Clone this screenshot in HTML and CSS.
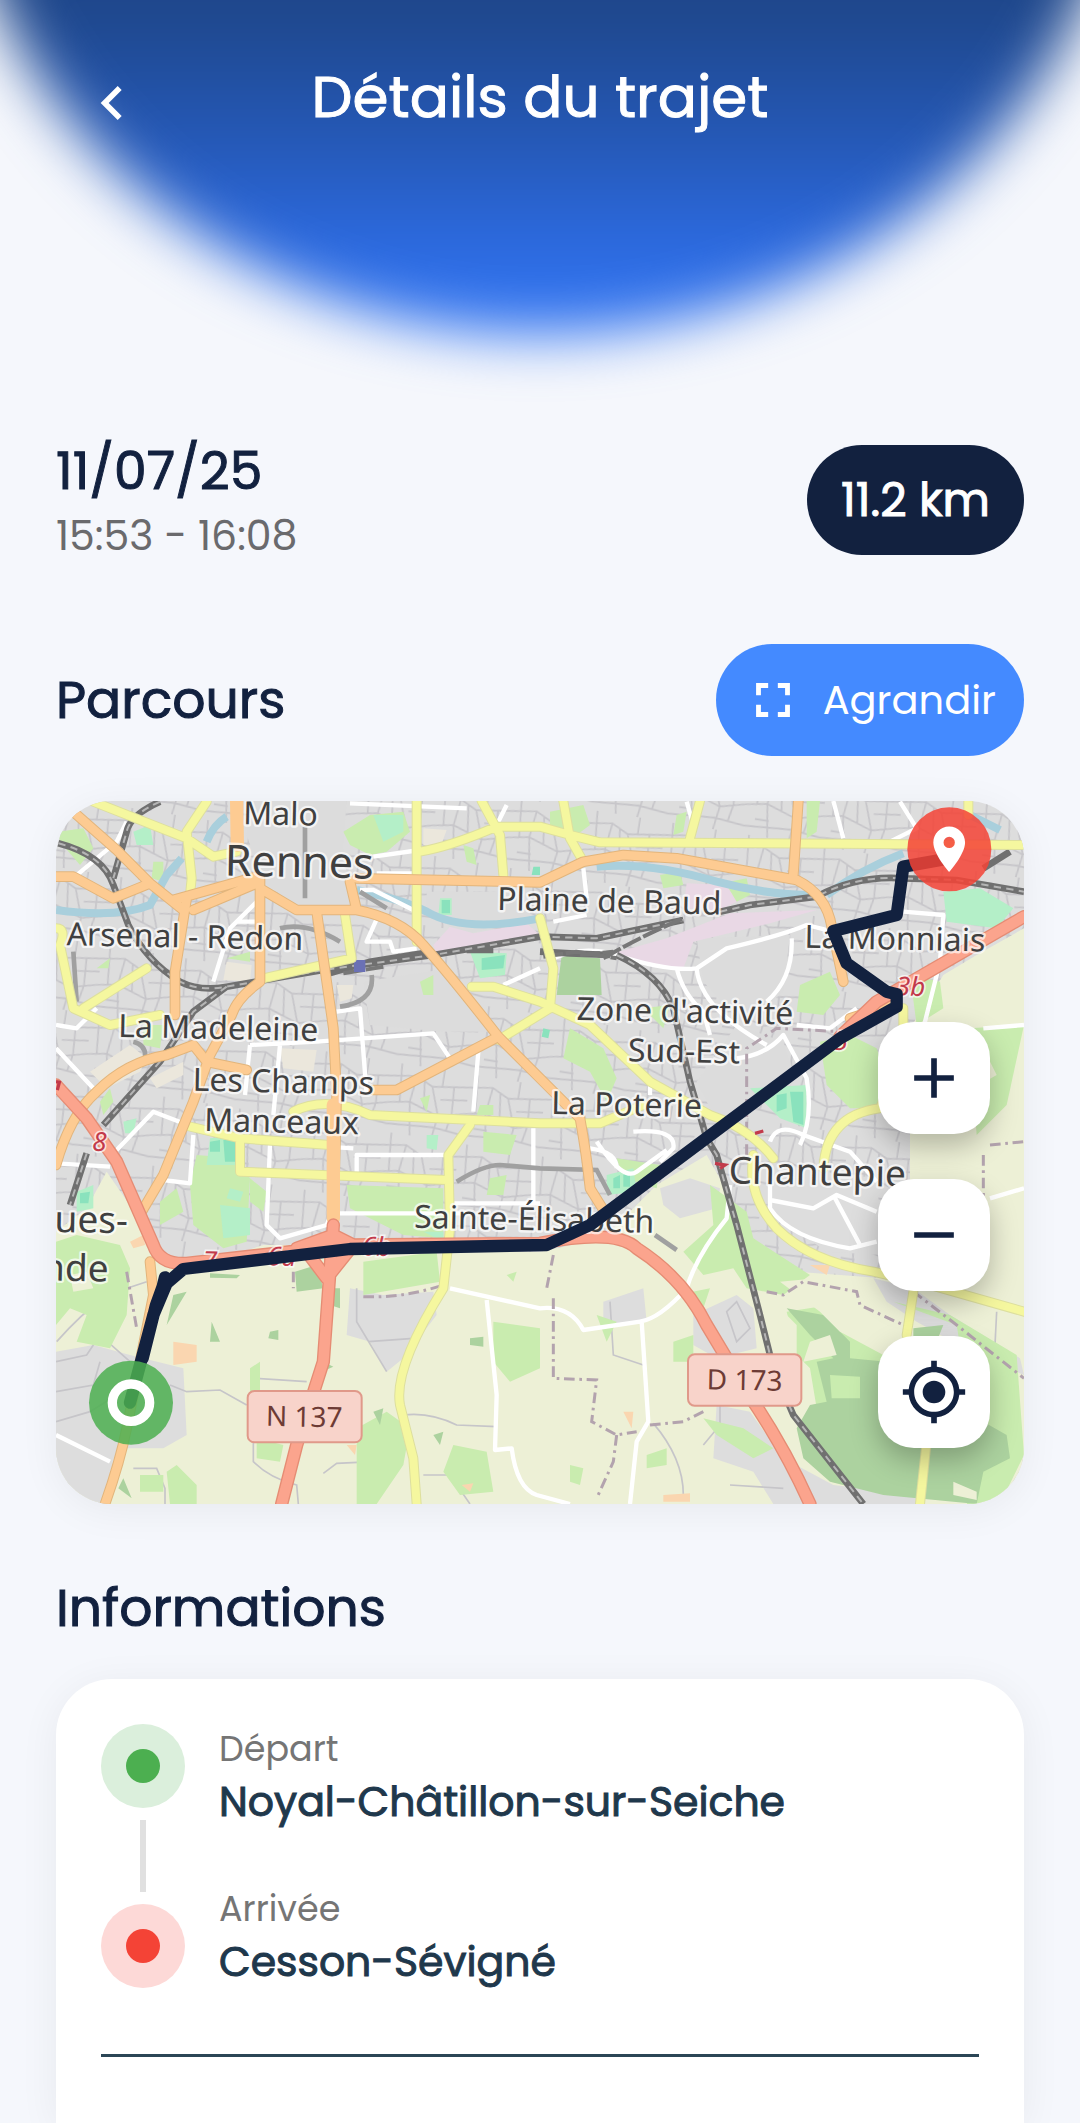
FILE: index.html
```
<!DOCTYPE html>
<html lang="fr">
<head>
    <meta charset="UTF-8">
    <meta name="viewport" content="width=device-width, initial-scale=1.0">
    <title>Détails du trajet</title>
    <link rel="stylesheet" href="styles.css">
</head>
<body>
    <header class="header">
        <button class="back" type="button" aria-label="Retour">
            <svg class="icon" viewBox="0 0 24 24"><path d="M15.41 7.41L14 6l-6 6 6 6 1.41-1.41L10.83 12z"/></svg>
        </button>
        <h1>Détails du trajet</h1>
    </header>

    <main class="content">
        <section class="summary">
            <div>
                <p class="date">11/07/25</p>
                <p class="hours">15:53 - 16:08</p>
            </div>
            <span class="distance">11.2 km</span>
        </section>

        <section class="title-row">
            <h2>Parcours</h2>
            <button class="expand" type="button">
                <svg class="icon-small" viewBox="0 0 24 24"><path d="M7 14H5v5h5v-2H7v-3zm-2-4h2V7h3V5H5v5zm12 7h-3v2h5v-5h-2v3zM14 5v2h3v3h2V5h-5z"/></svg>
                Agrandir
            </button>
        </section>

        <section class="map">
            <svg class="map-canvas" viewBox="18 18 2904 2109" preserveAspectRatio="xMidYMid slice">
                <defs>
                    <pattern id="streets" width="230" height="210" patternUnits="userSpaceOnUse" patternTransform="rotate(9)">
                        <path class="street" d="M0 40L70 30 120 55 230 40M0 120L60 110 150 140 230 120M70 30L60 110 75 210M120 55L150 140 140 210M185 45L190 128M20 0L30 118M30 160H72M0 185L140 175 230 185M190 128L180 180M150 0V50M95 45L105 125M150 90L230 80"/>
                    </pattern>
                </defs>

                <!-- land use -->
                <rect class="urban" x="0" y="0" width="2940" height="2140"/>
                <rect x="0" y="0" width="2940" height="2140" fill="url(#streets)"/>
                <path class="plain" d="M600 18H890L880 150 900 330 740 335 640 260 590 120zM1130 290H1350L1440 300V370L1240 420 1130 350zM940 560L1200 520 1330 710 1180 710 960 690zM1940 430L2220 420 2200 590 2080 690 1960 560zM2060 690L2200 740 2240 860 2010 1000 1940 860z"/>
                <path class="farm" d="M18 1310L110 1240 170 1130 260 1260 340 1400 520 1390 640 1350 930 1350 1150 1370 1470 1370 1660 1330 1820 1170 1970 1080 2060 1240 2090 1330 2240 1430 2500 1450 2580 1300V1080L2580 700 2680 540 2780 480 2922 400V2127H18z"/>
                <path class="sand" d="M120 830L240 750 290 790 270 830 170 880zM300 850L400 800 400 840 320 880zM530 500L605 510 600 560 520 555zM690 760L800 765 790 830 700 820zM860 570L910 570 905 610 870 620zM1120 100L1190 105 1170 160 1120 150z"/>
                <path class="urban" d="M18 1670L130 1650 240 1680 400 1720 410 1920 340 1960 230 1960 160 2127H18zM900 1480L1000 1500 1150 1490 1160 1560 1060 1690 1010 1730 960 1640 890 1620zM1830 1180L1920 1150 2010 1180 2000 1240 1890 1270 1840 1230zM1930 1560L2060 1500 2110 1540 2120 1660 2000 1690 1930 1650zM2170 2127L2110 2030 1990 1990 2000 1830 2100 1850 2200 1990 2350 2070 2600 2100V2127zM2470 1450L2590 1480 2700 1560 2910 1690 2922 1740 2780 1680 2600 1580 2510 1520zM2150 1110L2480 1150 2500 1380 2330 1370 2160 1250zM1660 1520L1780 1480 1790 1580 1660 1590z"/>
                <path class="street" d="M18 1700L110 1680 150 1620 240 1700M18 1790L130 1770 150 1700M18 1880L120 1850 200 1800M360 1770L410 1790 510 1785 590 1830M20 1640Q90 1560 170 1500L290 1460M610 1930V2000Q660 2050 740 2070L745 2127M620 1830V1750L770 1760M820 2035L860 2005 970 2000 1060 1980M1060 1860Q1140 1850 1220 1890L1340 1895M920 1480V1580L1010 1730M955 1640L1090 1630 1180 1500M1120 2040L1200 2040 1260 2127M1340 1680L1370 1660M1810 1885Q1900 1990 1900 2100M1680 1520L1690 1680 1780 1710M2010 1830V1890L1960 1950M2840 1550L2835 1650 2880 1700M250 2020H320L345 2080V2127M2040 2070L2200 2080M2030 1550L2060 1520 2100 1600 2060 1640z"/>

                <!-- parks, woods and sport grounds -->
                <path class="grass" d="M25 110L100 100 130 160 90 210 30 140zM880 110L960 60 1060 50 1080 110 1010 170 960 180 900 150zM1240 150L1270 160 1280 210 1250 200zM310 200H340V260L305 250zM140 520L180 490 175 520zM530 490L600 470 600 500zM1110 560L1150 540 1150 600 1120 600zM280 690L340 690 330 760 280 750zM150 920L180 880 190 920 160 960zM440 1080L560 1090 600 1150 590 1340 520 1360 430 1290 420 1170zM600 1150L650 1190 640 1250 600 1220zM330 1220L380 1180 400 1250 330 1290zM18 1340L80 1320 210 1350 240 1420 230 1560 180 1660 80 1640 110 1560 60 1540 18 1590zM890 1170L1180 1180 1180 1330 1060 1320 900 1240zM940 1400L1160 1370 1170 1460 940 1500zM1290 930H1330V960H1280zM1300 1010L1400 1020 1380 1080 1300 1070zM1110 910L1140 900 1130 950zM1320 1150L1370 1140 1360 1200 1310 1200zM1370 1440L1400 1430 1390 1460zM1500 50L1600 30 1620 90 1580 120 1500 90zM1880 60L1910 50 1900 110 1870 120zM2270 18H2310L2300 110 2270 130zM1990 270L2090 250 2100 300 2060 320zM1830 240L1890 230 1900 270 1840 280z"/>
                <path class="grass" d="M2310 740L2400 720 2480 760 2530 900 2480 940 2400 940 2330 870zM2600 820L2680 760 2760 700 2922 690 2870 930 2780 1020 2770 880 2840 840 2810 780zM2580 540L2670 560 2680 640 2600 690zM2250 570L2340 530 2370 600 2320 660 2240 650zM1780 640L1860 630 1840 700zM1560 700L1660 760 1700 850 1670 920 1620 830 1540 790zM1980 1170L2090 1250 2110 1330 2280 1440 2200 1500 2090 1480 2050 1420 1960 1440 1900 1370 1990 1290zM1700 1090L1830 1110 1820 1180 1720 1150zM1880 1500L1980 1480 1960 1540zM1640 1560L1700 1580 1670 1640zM1870 1640L1930 1620 1930 1700 1870 1700zM2210 1550L2340 1530 2440 1620 2520 1690 2500 1900 2310 1900 2280 1720 2240 1680zM2530 1520L2700 1560 2900 1680 2922 1980 2850 2127H2750L2840 1950 2760 1840 2720 1590zM1210 1950L1310 1970 1330 2090 1230 2100 1180 2030zM1330 1580L1470 1600 1470 1720 1380 1760 1330 1700zM920 1900L1010 1850 1080 1900 1060 2010 980 2127H920zM600 1720L630 1700V1790L600 1800zM620 1930L700 1950 690 2000 620 1990zM350 2030L380 2010 440 2070 440 2127H360zM270 2040L340 2040 340 2090 270 2090zM1790 1980L1850 1960 1850 2010 1790 2020zM1560 2010L1600 2020 1590 2070 1560 2060zM1960 1870L2080 1900 2170 1960 2110 1990 2000 1920z"/>
                <path class="wood" d="M1535 480L1650 490 1655 600 1520 600zM735 1430L800 1410 820 1480 740 1490zM845 1480L870 1480 870 1540 840 1530zM370 1500L410 1490 350 1590zM485 1580L510 1640 480 1640zM480 1435L570 1440 560 1450 480 1448zM660 1610L685 1605 685 1635 655 1630zM1260 1630L1300 1625 1300 1655 1260 1650zM1150 1920L1180 1910 1170 1950zM970 1850L1000 1840 990 1890zM820 1700L850 1715 815 1730zM220 2050L245 2110 205 2080zM2210 1540L2320 1560 2400 1640 2400 1690 2510 1700 2560 1790 2650 1860 2800 1880 2870 1920 2880 1990 2800 2030 2780 2127 2500 2100 2340 2060 2260 1990 2240 1900 2280 1830 2330 1820 2300 1700 2350 1690 2280 1620zM2590 1600L2680 1590 2660 1640 2590 1640z"/>
                <path class="farm" d="M2280 1640L2340 1620 2360 1680 2260 1700zM2190 1540L2240 1590 2240 1680 2170 1690zM2710 2060L2780 2090 2780 2115 2710 2100zM2190 1460L2300 1450 2440 1500 2520 1600 2500 1680 2370 1610 2310 1550zM60 1440L110 1430 130 1480 70 1490z"/>
                <path class="grass" d="M2340 1740L2430 1745 2430 1810 2345 1810z"/>
                <path class="sport" d="M250 110L300 90 310 150 260 150zM970 60L1060 60 1060 110 1000 140zM1170 310H1205V360H1165zM1260 470L1370 475 1365 540 1290 550zM480 1030L565 1020 560 1110 470 1110zM510 1230L600 1240 600 1320 520 1330zM80 1190L130 1170 130 1240 80 1250zM2100 880L2270 870 2270 1000 2190 970zM1670 1140L1750 1120 1760 1190 1670 1200zM2680 290L2790 280 2890 340 2840 400 2690 380zM220 980L260 970 250 1015 225 1015zM1130 1020L1165 1020 1160 1065 1130 1060zM540 1180L580 1190 570 1220 530 1210zM1120 1310L1180 1310 1180 1340z"/>
                <path class="pitch" d="M1175 315H1200V355H1175zM1295 490L1365 480 1360 520 1295 525zM480 1040L510 1035V1070H480zM520 1035H555V1100H525zM2180 900L2210 895V940L2180 950zM2220 890H2260V990L2230 980zM1690 1150L1710 1140V1180H1690zM1720 1140L1740 1130V1175H1720zM1480 700L1500 705 1495 730 1475 725zM1450 215H1470V240H1445zM90 1195L120 1190 115 1225H90z"/>
                <path class="retail" d="M1150 450L1200 395 1270 415 1430 385 1470 420 1330 455 1160 480zM1690 475L1850 430 2040 355 2300 345 2160 385 1930 440 1900 520 1790 505zM1910 265L2030 270 2060 320 2010 345 1900 340z"/>
                <path class="peach" d="M370 1640L440 1650 440 1700 370 1710zM240 1340L280 1320 285 1350 250 1360zM1235 2070L1270 2065 1260 2090zM890 1950L920 1950 915 1980zM2280 1410L2340 1410 2330 1440zM1720 1850L1750 1850 1745 1900zM1840 2100L1920 2095 1920 2120H1840z"/>

                <!-- water -->
                <path class="water" d="M18 345Q200 370 300 330L350 240 395 190M470 140Q490 90 530 65M920 285Q1060 315 1130 350 1240 415 1470 370M2330 300Q2440 220 2560 175M2760 60L2850 105M1640 215Q1800 200 2000 260 2150 300 2290 300"/>

                <!-- streets -->
                <path class="white" d="M18 690L80 700 140 640M18 760L130 880M75 245L200 140 230 80M620 320L540 400 490 560M560 380H620M930 285H970L1090 345M990 350L950 440 1020 440 1030 470 1100 460M860 650L930 640 950 900M600 750L585 900M690 750L670 960M600 750L800 740 1150 715 1200 790M1285 770L1270 950M660 1050L650 1290 690 1330 830 1290 850 1240M200 1065L310 950 400 985M430 1020L420 1165 340 1155M18 1105L180 1115M870 1255H1250M920 1145V1080H1190M1450 1000V1220M1210 1225H1470M970 185L1110 165M980 235H1100M1370 30L1340 90M900 25L1250 40M1360 570L1470 520M670 1045L910 1060"/>
                <path class="white" d="M1600 220L1610 310M1510 380L1610 360M1510 490Q1600 450 1700 480 1850 530 1940 520L2030 460Q2200 420 2270 390L2350 410M1940 520Q1950 640 2150 750M2225 430Q2230 550 2150 620M1880 520Q1900 600 1960 650L1980 720M2060 790Q2150 780 2200 720L2270 850Q2290 970 2250 1050M2560 350L2680 360 2670 500 2620 700M2240 690L2340 700 2420 640M2800 700L2922 690M2350 18L2380 130M2550 20L2600 100 2520 140M1910 20L1930 90M2160 1170V1240Q2220 1330 2400 1360L2480 1340M2160 1215L2290 1240 2360 1200 2480 1250M2350 1200L2430 1350M2040 1170L2030 1270Q1940 1380 1910 1480 1830 1570 1770 1580L1600 1605Q1560 1530 1470 1540L1200 1480M1775 1580L1795 1880 1760 1940 1740 2127M1310 1515L1340 1800 1335 1965 1385 1960Q1400 2080 1460 2100L1560 2127M18 1920L180 2000M2820 1210L2922 1180M1640 1040Q1720 1160 1760 1130L1850 1065M1620 1060Q1700 1070 1700 1120M2160 1040Q2180 980 2260 1020L2400 1070 2480 1160M1800 870V900M1750 1010Q1880 1000 1870 1060L1830 1100"/>
                <path class="path-dash" d="M1510 1510V1750L1640 1755 1625 1880 1700 1920 1760 1910M1700 1920L1690 2000 1640 2110M1510 1380L1490 1480M2150 1490L2200 1500 2260 1460 2420 1490 2430 1530 2560 1590M940 1505Q1060 1510 1180 1470M230 1430L260 1600M1800 1890L1900 1880 1960 1850M2090 1080V760L2180 700 2370 710M2800 1080V1240M2820 1050L2922 1040M730 1430V1480M2590 1490L2720 1590 2922 1750"/>

                <!-- railways -->
                <g class="rail">
                    <path d="M25 145Q160 180 190 270L235 390Q290 500 390 560 450 590 530 575L820 525 1150 480 1470 425 1640 430 1900 375M2010 350L2100 330 2300 305Q2420 240 2560 250L2720 255 2922 290M2800 220L2880 170M330 20Q240 60 230 110L190 250M530 575L430 650 330 800 160 990M110 1075L60 1230M1700 480Q1830 540 1870 640L1920 860 1970 1030 2000 1080 2060 1290 2130 1560 2170 1720 2230 1860 2440 2127M1470 470L1560 475 1680 480M820 540L960 500 1150 470M1250 465L1330 465"/>
                    <path class="rail-gap" d="M25 145Q160 180 190 270L235 390Q290 500 390 560 450 590 530 575L820 525 1150 480 1470 425 1640 430 1900 375M2010 350L2100 330 2300 305Q2420 240 2560 250L2720 255 2922 290M330 20Q240 60 230 110L190 250M530 575L430 650 330 800 160 990M110 1075L60 1230M1700 480Q1830 540 1870 640L1920 860 1970 1030 2000 1080 2060 1290 2130 1560 2170 1720 2230 1860 2440 2127"/>
                </g>
                <path class="yard" d="M1480 485L1580 470 1700 490M1660 490Q1760 430 1900 370M1590 480L1690 470M880 535L1000 515"/>
                <path class="tunnel" d="M765 95V310M690 400Q770 380 870 440M965 540Q975 620 870 635M250 740Q290 750 285 790M70 470L80 620M1220 1160Q1300 1110 1350 1110L1470 1120 1640 1125 1680 1200M1815 1320L1880 1365M930 290L1010 340"/>
                <rect class="station" x="912" y="495" width="34" height="36"/>

                <!-- roads, casing first -->
                <g class="road-yellow">
                    <path id="yellow" d="M130 20L410 130 490 185 560 170M470 20L410 110 425 250 420 300M1100 20V440M1110 170Q1200 155 1340 95L1470 95 1560 120 1650 142 2922 150M1295 18L1350 120 1360 240M1540 18L1560 130 1600 200M1950 18L1920 130M2755 18V60M18 400Q50 400 30 450L70 640 180 690 330 660M100 640L290 520M885 360L905 490 640 550M1265 575H1330L1470 620 1620 690 1800 860 1980 960Q2100 1000 2170 1090M1470 370L1510 520 1500 640M2110 1080Q2090 1200 2180 1300 2280 1400 2470 1430L2640 1470 2922 1550M2320 1120Q2330 960 2490 940L2560 780V640M730 950Q830 900 960 960L1470 985 1650 985 1780 930M1345 735L1500 640M1260 990L1195 1080 1200 1300 1180 1480Q1030 1720 1050 1830L1090 1990 1100 2127M400 990L570 1030V1130L1190 1155M570 1030L840 1050M2590 1490L2570 1620M2630 1940L2610 2127"/>
                    <use class="fill" href="#yellow"/>
                </g>
                <g class="road-orange">
                    <path id="orange" d="M75 55L200 165 300 265 400 345M18 245H70L190 310 300 265M370 315L620 245M430 345L620 265M630 250V560Q560 610 545 660L480 780 430 920 340 1140 275 1250M410 310L375 530V660M630 280L740 345H920L900 260M920 250L1470 262 1600 200 1720 180 1880 190 2240 255Q2330 300 2345 395L2380 560M2245 18L2230 240M800 350L850 700 860 900 850 1290M920 345Q1050 370 1120 450 1200 540 1345 725L1470 850 1590 970Q1610 1080 1620 1180L1670 1260M970 885H1040L1345 725M18 1110Q60 960 140 890 230 800 350 780L430 750 470 800 590 825M300 1400L310 1500 230 1900Q210 2000 165 2127M2400 670L2540 625"/>
                    <use class="fill" href="#orange"/>
                    <path class="wide" d="M560 18L562 150M850 930V1270"/>
                </g>
                <g class="road-red">
                    <path id="red" d="M18 870L110 970 200 1100Q270 1260 310 1350 330 1410 410 1405L900 1350 1470 1345Q1700 1300 1760 1360 1900 1450 1970 1590L2090 1790Q2200 1950 2280 2127M850 1290L820 1700 740 1950 695 2127M740 1360L850 1320 910 1350 830 1450 770 1370M2370 725L2480 620 2922 365"/>
                    <use class="fill" href="#red"/>
                </g>

                <!-- road signs -->
                <rect class="sign" x="593" y="1788" width="342" height="154" rx="20"/>
                <rect class="sign" x="1914" y="1678" width="340" height="154" rx="20"/>
                <text class="sign-text" x="763" y="1895">N 137</text>
                <text class="sign-text" x="2084" y="1785">D 173</text>

                <!-- exits -->
                <text class="exit" x="148" y="1068">8</text>
                <text class="exit" x="2582" y="602">3b</text>
                <text class="exit" x="480" y="1425">7</text>
                <text class="exit" x="695" y="1412">6a</text>
                <text class="exit" x="980" y="1382">6b</text>
                <text class="exit" x="2372" y="765">5</text>
                <path class="exit-mark" d="M18 860L28 862 22 885M1995 1105L2025 1110 2010 1120M2115 1015L2140 1008"/>

                <!-- places -->
                <text class="place" x="692" y="90">Malo</text>
                <text class="city" x="748" y="246">Rennes</text>
                <text class="place" x="405" y="458">Arsenal - Redon</text>
                <text class="place" x="505" y="732">La Madeleine</text>
                <text class="place" x="700" y="893">Les Champs</text>
                <text class="place" x="695" y="1013">Manceaux</text>
                <text class="place" x="1678" y="352">Plaine de Baud</text>
                <text class="place" x="1905" y="682">Zone d'activité</text>
                <text class="place" x="1902" y="802">Sud-Est</text>
                <text class="place" x="1730" y="962">La Poterie</text>
                <text class="place" x="2535" y="464">La Monniais</text>
                <text class="place" x="1453" y="1306">Sainte-Élisabeth</text>
                <text class="town" x="2302" y="1170">Chantepie</text>
                <text class="town" x="124" y="1313">ues-</text>
                <text class="town" x="76" y="1458">nde</text>

                <!-- trip -->
                <path class="route" d="M2698 190L2560 215 2540 360 2350 408 2390 505 2510 590 2540 598V635L2370 730 1620 1290 1490 1350 900 1362 400 1422 350 1465 310 1560 240 1823M345 1447L338 1475 318 1530 278 1690"/>
                <circle class="marker-end" cx="2698" cy="163" r="126"/>
                <path class="pin" transform="translate(2616 81) scale(6.8)" d="M12 2C8.13 2 5 5.13 5 9c0 5.25 7 13 7 13s7-7.75 7-13c0-3.87-3.13-7-7-7zm0 9.5a2.5 2.5 0 0 1 0-5 2.5 2.5 0 0 1 0 5z"/>
                <circle class="marker-start" cx="243" cy="1823" r="126"/>
                <circle class="ring" cx="243" cy="1823" r="56"/>
            </svg>

            <div class="map-controls">
                <button type="button" aria-label="Zoomer">
                    <svg class="icon" viewBox="0 0 24 24"><path d="M19 13h-6v6h-2v-6H5v-2h6V5h2v6h6z"/></svg>
                </button>
                <button type="button" aria-label="Dézoomer">
                    <svg class="icon" viewBox="0 0 24 24"><path d="M19 13H5v-2h14z"/></svg>
                </button>
                <button type="button" aria-label="Recentrer">
                    <svg class="icon" viewBox="0 0 24 24"><path d="M12 8c-2.21 0-4 1.79-4 4s1.79 4 4 4 4-1.79 4-4-1.79-4-4-4zm8.94 3A8.994 8.994 0 0 0 13 3.06V1h-2v2.06A8.994 8.994 0 0 0 3.06 11H1v2h2.06A8.994 8.994 0 0 0 11 20.94V23h2v-2.06A8.994 8.994 0 0 0 20.94 13H23v-2h-2.06zM12 19c-3.87 0-7-3.13-7-7s3.13-7 7-7 7 3.13 7 7-3.13 7-7 7z"/></svg>
                </button>
            </div>
        </section>

        <h2 class="info-title">Informations</h2>
        <section class="card">
            <div class="steps">
                <div class="timeline">
                    <span class="dot dot-start"></span>
                    <span class="line"></span>
                    <span class="dot dot-end"></span>
                </div>
                <div class="stops">
                    <div>
                        <p class="label">Départ</p>
                        <p class="stop">Noyal-Châtillon-sur-Seiche</p>
                    </div>
                    <div>
                        <p class="label">Arrivée</p>
                        <p class="stop">Cesson-Sévigné</p>
                    </div>
                </div>
            </div>
            <hr>
        </section>
    </main>
</body>
</html>
```
FILE: styles.css
```
* {
    box-sizing: border-box;
}
body {
    margin: 0;
    min-height: 100vh;
    display: flex;
    flex-direction: column;
    overflow: hidden;
    background-color: #f5f7fc;
    color: #12213f;
    font-family: Poppins, Inter, sans-serif;
}
h1, h2, p {
    margin: 0;
    font-weight: 400;
}
h1, h2, .date, .distance, .stop {
    -webkit-text-stroke: 1px;
}
button {
    font-family: inherit;
    border: none;
    cursor: pointer;
}
svg {
    display: block;
}
.icon {
    width: 68px;
    height: 68px;
    fill: currentColor;
}
.icon-small {
    width: 58px;
    height: 58px;
    fill: currentColor;
}

/* Header */
.header {
    position: relative;
    display: grid;
    grid-template-columns: 1fr auto 1fr;
    align-items: center;
    height: 400px;
    padding: 57px 56px 263px;
    color: white;
}
.header::before {
    content: "";
    position: absolute;
    z-index: -1;
    top: -715px;
    left: -4%;
    width: 108%;
    height: 1050px;
    border-radius: 50%;
    background: linear-gradient(#1e4689 68%, #2558b5 81%, #2c69dd 91%, #3478f6);
    filter: blur(28px);
}
.header h1 {
    font-size: 58px;
    line-height: 76px;
}
.back {
    justify-self: start;
    padding: 12px 22px 0;
    background: none;
    color: white;
}

/* Content */
.content {
    flex: 1;
    display: flex;
    flex-direction: column;
    padding: 35px 56px 0;
}
.summary, .title-row {
    display: flex;
    justify-content: space-between;
    align-items: center;
}
.date {
    font-size: 52px;
    line-height: 72px;
}
.hours {
    font-size: 41px;
    line-height: 58px;
    color: #6a6a6d;
}
.distance {
    padding: 0 34px;
    border-radius: 56px;
    background-color: #12213f;
    color: white;
    font-size: 46px;
    line-height: 110px;
}
.title-row {
    margin: 79px 0 45px;
}
h2 {
    font-size: 52px;
    line-height: 72px;
}
.expand {
    display: flex;
    align-items: center;
    gap: 21px;
    height: 112px;
    padding: 0 28px;
    border-radius: 56px;
    background-color: #448aff;
    color: white;
    font-size: 40px;
}

/* Map */
.map {
    position: relative;
    height: 703px;
    border-radius: 56px;
    overflow: hidden;
    box-shadow: 0 6px 40px rgba(0, 0, 0, 0.06);
}
.map-canvas {
    width: 100%;
    height: 100%;
}
.map-controls {
    position: absolute;
    right: 34px;
    bottom: 56px;
    display: grid;
    gap: 45px;
}
.map-controls button {
    display: grid;
    place-items: center;
    width: 112px;
    height: 112px;
    padding: 0;
    border-radius: 36px;
    background-color: white;
    color: #12213f;
    box-shadow: 0 12px 28px rgba(0, 0, 0, 0.25);
}
.urban { fill: #dddddd; }
.plain { fill: #dcdcdc; }
.farm { fill: #edf0d6; }
.sand { fill: #ebe7dc; }
.grass { fill: #c9ecaf; }
.wood { fill: #acd29f; }
.sport { fill: #b4efc8; }
.pitch { fill: #8ae2bd; }
.retail { fill: #e9d8e5; }
.peach { fill: #fad6b0; }
.station { fill: #6b71b5; }
.street {
    fill: none;
    stroke: #c6c5c9;
    stroke-width: 5;
}
.water {
    fill: none;
    stroke: #a9cfdc;
    stroke-width: 24;
}
.white {
    fill: none;
    stroke: white;
    stroke-width: 13;
    stroke-linejoin: round;
}
.path-dash {
    fill: none;
    stroke: #b3a3ae;
    stroke-width: 9;
    stroke-dasharray: 32 14 8 14;
}
.rail {
    fill: none;
    stroke: #707070;
    stroke-width: 20;
}
.rail-gap {
    stroke: #b5b5b5;
    stroke-width: 6;
    stroke-dasharray: 22 16;
}
.yard {
    fill: none;
    stroke: #777777;
    stroke-width: 12;
    stroke-dasharray: 60 8;
}
.tunnel {
    fill: none;
    stroke: #a0a0a0;
    stroke-width: 14;
}
.road-yellow, .road-orange, .road-red {
    fill: none;
    stroke-linejoin: round;
    stroke-linecap: round;
}
.road-yellow {
    stroke: #dddf9e;
    stroke-width: 30;
}
.road-yellow .fill {
    stroke: #f5f79f;
    stroke-width: 24;
}
.road-orange {
    stroke: #e2b57c;
    stroke-width: 32;
}
.road-orange .fill {
    stroke: #fdcb92;
    stroke-width: 26;
}
.road-orange .wide {
    stroke: #fdcb92;
    stroke-width: 40;
}
.road-red {
    stroke: #e58c74;
    stroke-width: 40;
}
.road-red .fill {
    stroke: #fba48d;
    stroke-width: 32;
}
.map-canvas text {
    font-family: "Noto Sans", sans-serif;
    text-anchor: middle;
    transform-box: fill-box;
    transform-origin: center;
    transform: rotate(1.2deg);
}
.place, .city, .town {
    fill: #404040;
    stroke: rgba(255, 255, 255, 0.7);
    stroke-width: 14;
    stroke-linejoin: round;
    paint-order: stroke;
}
.place {
    font-size: 96px;
}
.town {
    font-size: 111px;
}
.city {
    font-size: 129px;
}
.sign {
    fill: #f8d3ca;
    stroke: #e0998a;
    stroke-width: 6;
}
.sign-text {
    font-size: 84px;
    fill: #6d3b35;
}
.exit {
    font-size: 78px;
    font-style: italic;
    fill: #c23a4b;
    stroke: rgba(255, 255, 255, 0.7);
    stroke-width: 10;
    paint-order: stroke;
}
.exit-mark {
    fill: none;
    stroke: #c23a4b;
    stroke-width: 10;
}
.route {
    fill: none;
    stroke: #12213f;
    stroke-width: 37;
    stroke-linecap: round;
    stroke-linejoin: round;
}
.marker-end {
    fill: #f44336;
    opacity: 0.85;
}
.marker-start {
    fill: #4caf50;
    opacity: 0.85;
}
.pin {
    fill: white;
}
.ring {
    fill: none;
    stroke: white;
    stroke-width: 28;
}

/* Informations */
.info-title {
    margin: 68px 0 35px;
}
.card {
    flex: 1;
    padding: 45px;
    border-radius: 56px 56px 0 0;
    background-color: white;
    box-shadow: 0 6px 40px rgba(0, 0, 0, 0.06);
}
.steps {
    display: flex;
    gap: 34px;
}
.timeline {
    display: flex;
    flex-direction: column;
    align-items: center;
    gap: 12px;
}
.dot {
    display: grid;
    place-items: center;
    width: 84px;
    height: 84px;
    border-radius: 50%;
}
.dot::after {
    content: "";
    width: 34px;
    height: 34px;
    border-radius: 50%;
}
.dot-start {
    background-color: #dbefdc;
}
.dot-start::after {
    background-color: #4caf50;
}
.dot-end {
    background-color: #fdd9d7;
}
.dot-end::after {
    background-color: #f44336;
}
.line {
    width: 6px;
    height: 72px;
    background-color: #e0e0e0;
}
.stops {
    display: grid;
    align-content: start;
    gap: 54px;
}
.label {
    font-size: 35px;
    line-height: 50px;
    color: #757575;
}
.stop {
    font-size: 41px;
    line-height: 56px;
    color: #1f384c;
}
hr {
    margin: 64px 0 0;
    border: none;
    border-top: 3px solid #2b4656;
}
```
